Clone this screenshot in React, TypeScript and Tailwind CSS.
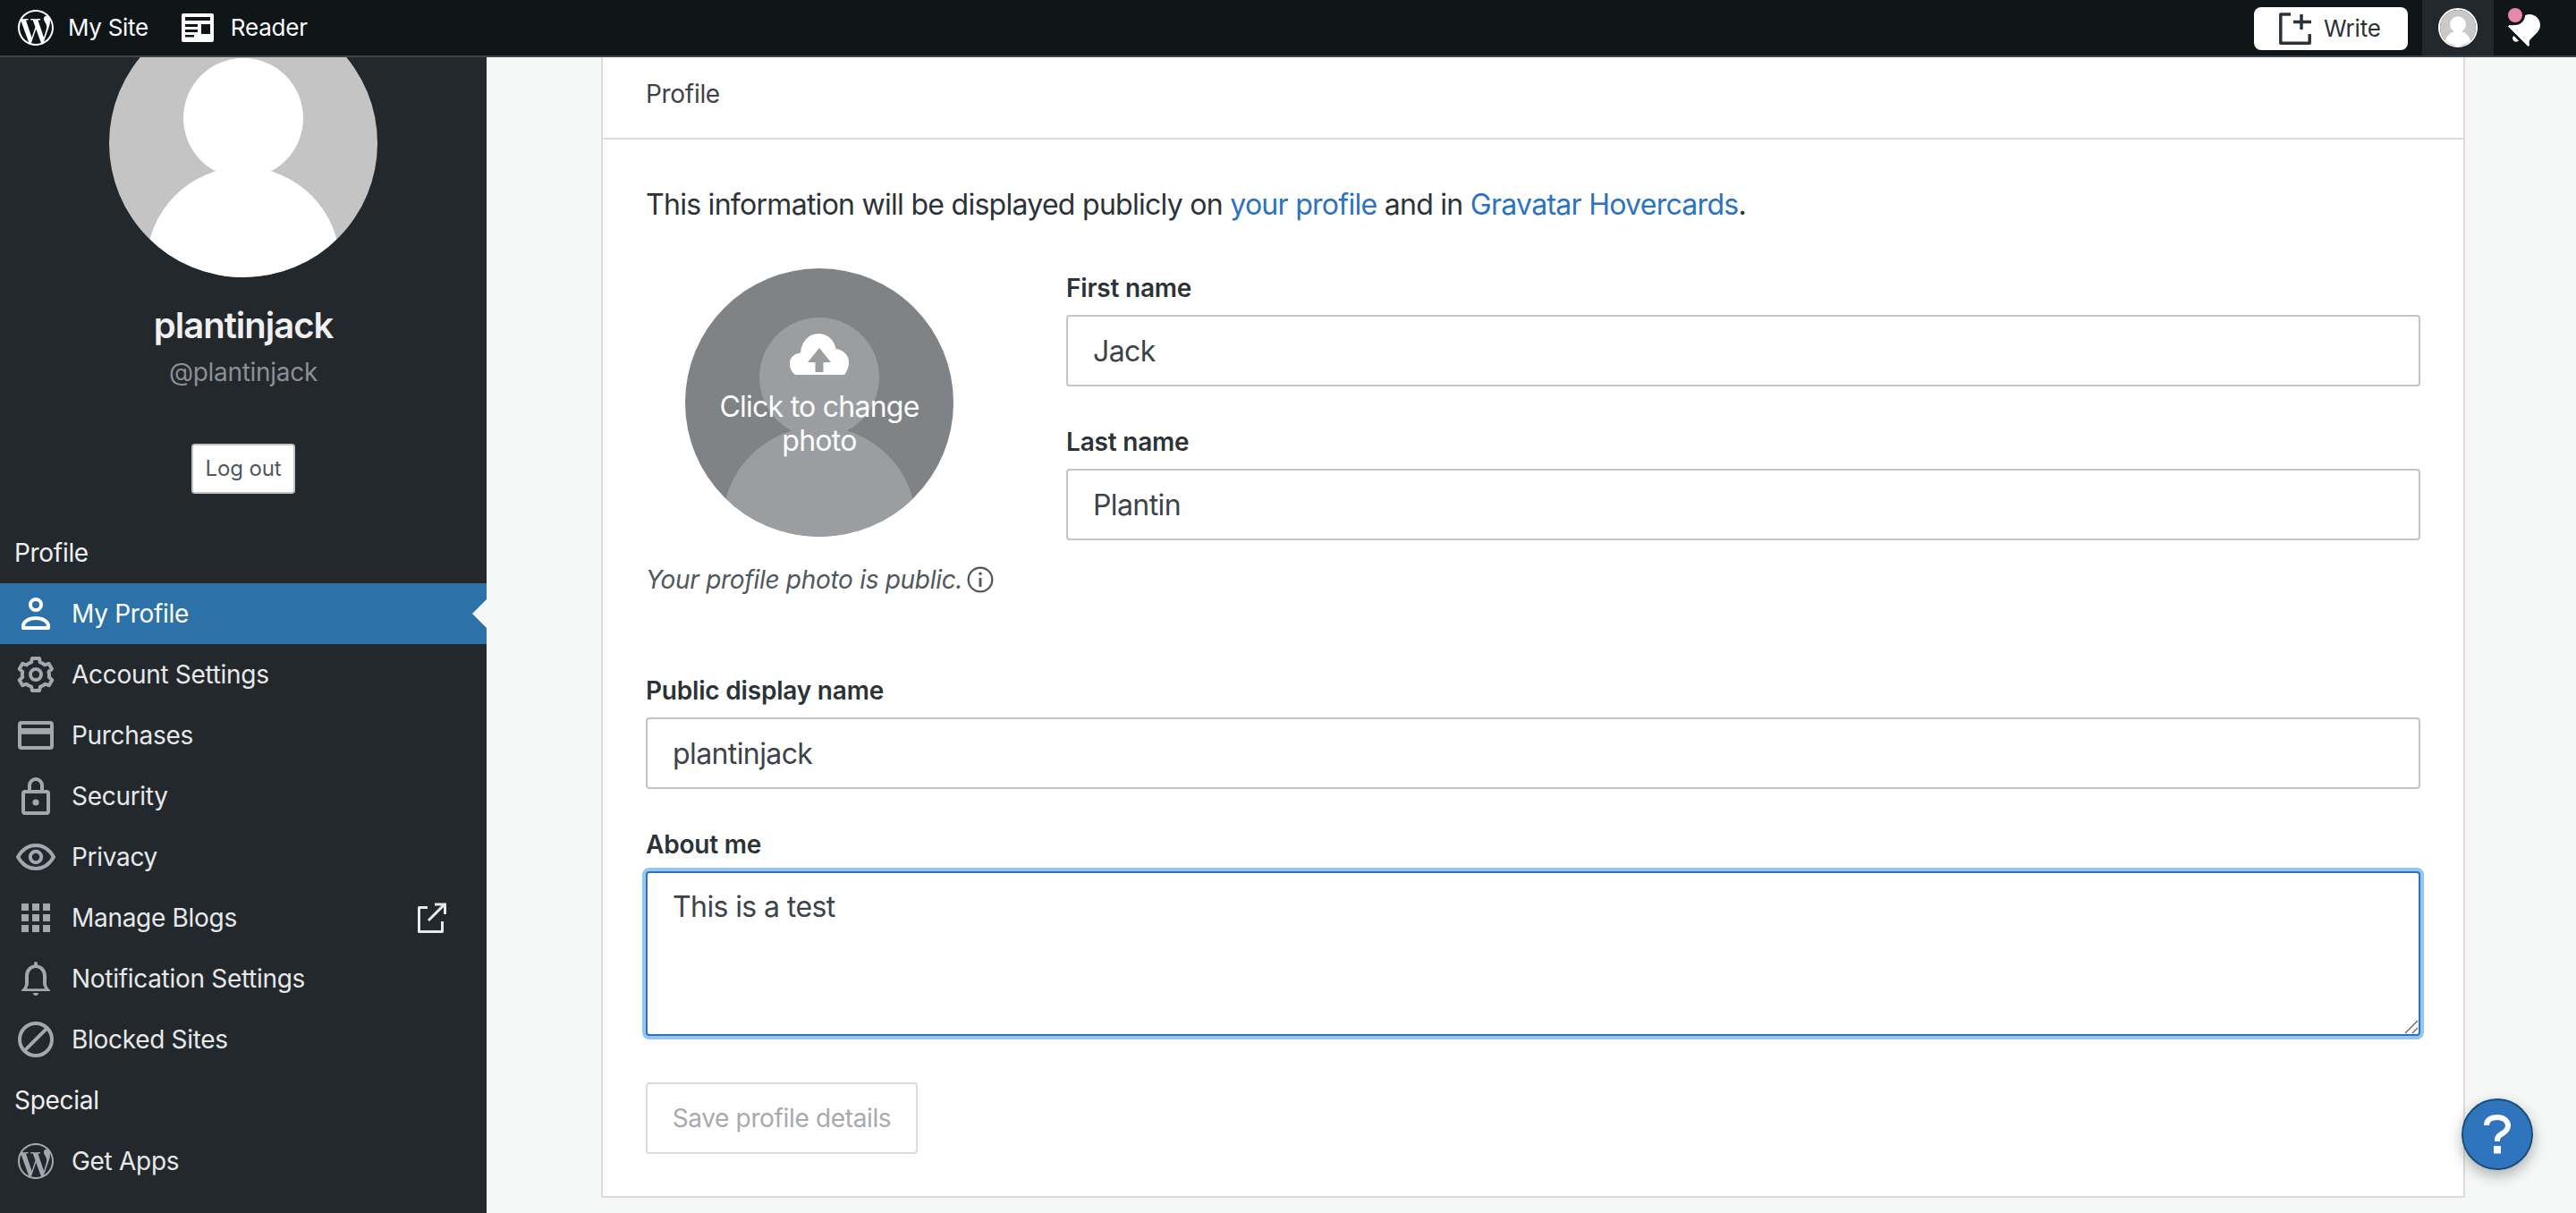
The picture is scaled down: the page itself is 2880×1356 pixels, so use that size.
import React from "react";

const WP_PATH =
  "M12.158 12.786l-2.698 7.84c.806.236 1.657.365 2.54.365 1.047 0 2.05-.18 2.986-.51-.024-.037-.046-.078-.065-.123l-2.762-7.57zM3.008 12c0 3.56 2.07 6.634 5.068 8.092L3.788 8.342c-.5 1.117-.78 2.354-.78 3.658zm15.06-.454c0-1.112-.398-1.88-.74-2.48-.456-.74-.883-1.368-.883-2.11 0-.825.627-1.595 1.51-1.595.04 0 .078.006.116.008-1.598-1.464-3.73-2.36-6.07-2.36-3.14 0-5.904 1.613-7.512 4.053.21.008.41.012.58.012.94 0 2.395-.114 2.395-.114.484-.028.54.684.057.74 0 0-.487.058-1.03.086l3.275 9.74 1.968-5.902-1.4-3.838c-.485-.028-.944-.085-.944-.085-.486-.03-.43-.77.056-.742 0 0 1.484.114 2.368.114.94 0 2.397-.114 2.397-.114.486-.028.543.684.058.74 0 0-.488.058-1.03.086l3.25 9.665.897-2.997c.456-1.17.684-2.137.684-2.907zm1.82-3.86c.04.286.06.593.06.924 0 .912-.17 1.938-.683 3.22l-2.746 7.94c2.672-1.558 4.47-4.454 4.47-7.77 0-1.564-.4-3.033-1.1-4.314zM12 22C6.486 22 2 17.514 2 12S6.486 2 12 2s10 4.486 10 10-4.486 10-10 10z";

const Wp = ({ className }: { className: string }) => (
  <svg viewBox="0 0 24 24" className={className} fill="currentColor">
    <path d={WP_PATH} />
  </svg>
);

const icons: Record<string, React.ReactNode> = {
  user: (
    <>
      <circle cx="12" cy="7" r="3" fill="none" stroke="currentColor" strokeWidth="2" />
      <path d="M5 20v-1.2C5 16.5 8 14.5 12 14.5s7 2 7 4.3V20z" fill="none" stroke="currentColor" strokeWidth="2" strokeLinejoin="round" />
    </>
  ),
  cog: (
    <>
      <path
        d="M19.4 12c0-.55-.06-1-.17-1.5l1.75-1.6-1.75-3-2.25.76c-.75-.66-1.65-1.2-2.65-1.5L14 3h-4l-.5 2.16c-1 .3-1.9.84-2.65 1.5L4.6 5.9 2.85 8.9l1.75 1.6c-.1.5-.17.95-.17 1.5s.07 1 .17 1.5l-1.75 1.6 1.75 3 2.25-.76c.75.66 1.65 1.2 2.65 1.5L10 21h4l.5-2.16c1-.3 1.9-.84 2.65-1.5l2.25.76 1.75-3-1.75-1.6c.11-.5.17-.95.17-1.5z"
        fill="none"
        stroke="currentColor"
        strokeWidth="2"
        strokeLinejoin="round"
      />
      <circle cx="12" cy="12" r="3" fill="none" stroke="currentColor" strokeWidth="2" />
    </>
  ),
  card: (
    <>
      <rect x="3" y="5" width="18" height="14" rx="1" fill="none" stroke="currentColor" strokeWidth="2" />
      <rect x="3" y="8" width="18" height="3.4" fill="currentColor" />
    </>
  ),
  lock: (
    <>
      <rect x="5" y="9.5" width="14" height="12" rx="1" fill="none" stroke="currentColor" strokeWidth="2" />
      <path d="M8.5 9.5V6a3.5 3.5 0 0 1 7 0v3.5" fill="none" stroke="currentColor" strokeWidth="2" />
      <circle cx="12" cy="15.5" r="1.8" fill="currentColor" />
    </>
  ),
  eye: (
    <>
      <path d="M2 12c2.2-3.8 5.8-6.5 10-6.5S19.8 8.2 22 12c-2.2 3.800-5.800 6.500-10 6.500S4.200 15.800 2 12z" fill="none" stroke="currentColor" strokeWidth="2" strokeLinejoin="round" />
      <circle cx="12" cy="12" r="3.100" fill="none" stroke="currentColor" strokeWidth="2" />
    </>
  ),
  grid: (
    <path d="M4 4h4v4H4zM10 4h4v4h-4zM16 4h4v4h-4zM4 10h4v4H4zM10 10h4v4h-4zM16 10h4v4h-4zM4 16h4v4H4zM10 16h4v4h-4zM16 16h4v4h-4z" fill="currentColor" />
  ),
  bell: (
    <>
      <path d="M4 19v-.6c1.300-.9 2-2.100 2-3.900V10.500C6 7.200 8.200 4.800 11 4.300V3.500a1 1 0 0 1 2 0v.8c2.800.5 5 2.900 5 6.200v4c0 1.800.7 3 2 3.900v.6z M6.800 17.600h10.400c-.7-.9-1.200-1.900-1.200-3.100v-4c0-2.500-1.800-4.500-4-4.500s-4 2-4 4.500v4c0 1.200-.5 2.200-1.200 3.100z" fill="currentColor" fillRule="evenodd" />
      <path d="M10.500 20h3c0 .9-.7 1.500-1.500 1.500s-1.500-.6-1.500-1.500z" fill="currentColor" />
    </>
  ),
  block: (
    <>
      <circle cx="12" cy="12" r="9" fill="none" stroke="currentColor" strokeWidth="2" />
      <path d="M5.800 18.200L18.200 5.800" stroke="currentColor" strokeWidth="2" />
    </>
  ),
};

const Icon = ({ name }: { name: string }) => (
  <svg viewBox="0 0 24 24" className="h-[48px] w-[48px] shrink-0">
    {icons[name]}
  </svg>
);

const NavRow = ({ icon, label, active, external }: { icon: string; label: string; active?: boolean; external?: boolean }) => (
  <div className={`relative flex h-[68px] items-center gap-[16px] pl-[16px] pr-[44px] ${active ? "bg-[#2c72a9] text-white" : "text-[#e8e9ea]"}`}>
    <span className={active ? "text-white" : "text-[#a2a7b0]"}>
      {icon === "wp" ? <Wp className="h-[48px] w-[48px]" /> : <Icon name={icon} />}
    </span>
    <span className="flex-1 text-[28px] leading-[36px] tracking-[-0.3px]">{label}</span>
    {external && (
      <svg viewBox="0 0 36 36" className="h-[36px] w-[36px] text-[#e8e9ea]" fill="none" stroke="currentColor" strokeWidth="3">
        <path d="M14 6.500H4.500v27h26V22" strokeLinejoin="round" />
        <path d="M15 21L33 3M22 3h11.500V14" />
      </svg>
    )}
    {active && (
      <span className="absolute right-0 top-[18px] h-0 w-0 border-y-[16px] border-r-[16px] border-y-transparent border-r-[#f6f7f7]" />
    )}
  </div>
);

const Avatar = ({ bg, fg }: { bg: string; fg: string }) => (
  <svg viewBox="0 0 300 300" className="h-[300px] w-[300px] block">
    <defs>
      <clipPath id={`clip-${fg.slice(1)}`}>
        <circle cx="150" cy="150" r="150" />
      </clipPath>
    </defs>
    <g clipPath={`url(#clip-${fg.slice(1)})`}>
      <rect width="300" height="300" fill={bg} />
      <circle cx="150" cy="122" r="67" fill={fg} />
      <circle cx="150" cy="285" r="108" fill={fg} />
    </g>
  </svg>
);

const Field = ({ label, value, className }: { label: string; value: string; className?: string }) => (
  <div className={className}>
    <label className="block h-[36px] text-[28px] font-semibold leading-[36px] tracking-[-0.2px] text-[#2c3338]">{label}</label>
    <input
      defaultValue={value}
      className="mt-[12px] block h-[80px] w-full rounded-[4px] border-2 border-[#c3c4c7] bg-white px-[28px] text-[32px] tracking-[-0.6px] text-[#3c434a] outline-none"
    />
  </div>
);

export default function App() {
  return (
    <div className="flex h-screen w-full flex-col overflow-hidden bg-[#f6f7f7] font-['Inter',sans-serif]">
      <header className="flex h-[64px] shrink-0 items-stretch border-b-2 border-[#3c434a] bg-[#101517] text-white">
        <div className="flex items-center pl-[20px]">
          <Wp className="h-[48px] w-[48px] -mx-[4px]" />
          <span className="ml-[16px] text-[26px] leading-[36px] tracking-[-0.3px]">My Site</span>
        </div>
        <div className="ml-[37px] flex items-center">
          <svg viewBox="0 0 36 32" className="h-[32px] w-[36px]">
            <path fillRule="evenodd" fill="#fff" d="M2 0h32a2 2 0 0 1 2 2v28a2 2 0 0 1-2 2H2a2 2 0 0 1-2-2V2a2 2 0 0 1 2-2z M4 4v4h28V4z M4 12v3h14v-3z M22 12v11h10V12z M4 18v3h14v-3z M4 24v2.500h10V24z" />
          </svg>
          <span className="ml-[19px] text-[26px] leading-[36px] tracking-[-0.2px]">Reader</span>
        </div>
        <div className="ml-auto flex items-stretch">
          <div className="my-[8px] flex h-[48px] w-[172px] items-center rounded-[8px] bg-white pl-[28px] text-[#2c3338]">
            <svg viewBox="0 0 36 36" className="h-[36px] w-[36px]" fill="none" stroke="currentColor" strokeWidth="3.500">
              <path d="M13 2H1.800v32.200H34.200V24" strokeLinejoin="round" />
              <path d="M25 2v17M16 10.500h20" />
            </svg>
            <span className="ml-[14px] text-[26px] leading-[36px] tracking-[-0.2px]">Write</span>
          </div>
          <div className="ml-[16px] flex h-[62px] w-[80px] items-center justify-center bg-[#23282d]">
            <div className="h-[44px] w-[44px] overflow-hidden rounded-full border-2 border-white">
              <svg viewBox="0 0 300 300" className="h-full w-full block">
                <rect width="300" height="300" fill="#c9c9c9" />
                <circle cx="150" cy="122" r="67" fill="#fff" />
                <circle cx="150" cy="285" r="108" fill="#fff" />
              </svg>
            </div>
          </div>
          <div className="relative w-[92px]">
            <svg viewBox="0 0 24 24" className="absolute left-[10px] top-[10px] h-[48px] w-[48px]" fill="#fff">
              <path d="M6.140 14.970l2.828 2.827c-.362.362-.862.586-1.414.586-1.105 0-2-.895-2-2 0-.552.224-1.052.586-1.414zm8.867 5.324L14.300 21 3 9.700l.706-.707 1.102.157c.754.108 1.690-.122 2.077-.510l3.885-3.884c2.340-2.340 6.135-2.340 8.475 0s2.340 6.135 0 8.475l-3.885 3.886c-.388.388-.618 1.323-.510 2.077l.157 1.100z" />
            </svg>
            <span className="absolute left-[13px] top-[6px] box-content h-[16px] w-[16px] rounded-full border-[3px] border-[#101517] bg-[#e589ab]" />
          </div>
        </div>
      </header>

      <div className="flex min-h-0 flex-1">
        <aside className="w-[544px] shrink-0 overflow-hidden bg-[#23282d]">
          <div className="-mt-[54px] flex flex-col items-center">
            <Avatar bg="#c4c4c4" fg="#ffffff" />
            <div className="mt-[30px] h-[48px] text-[40px] font-semibold leading-[48px] tracking-[-1px] text-[#f0f0f1]">plantinjack</div>
            <div className="mt-[10px] h-[36px] text-[28px] leading-[36px] tracking-[-0.3px] text-[#8c8f94]">@plantinjack</div>
            <div className="mt-[62px] flex h-[56px] w-[116px] items-center justify-center rounded-[4px] border-2 border-[#c3c4c7] bg-white text-[24px] tracking-[-0.1px] text-[#50575e]">
              Log out
            </div>
          </div>
          <div className="mt-[32px] flex h-[68px] items-center pl-[16px] text-[28px] tracking-[-0.3px] text-[#f0f0f1]">Profile</div>
          <NavRow icon="user" label="My Profile" active />
          <NavRow icon="cog" label="Account Settings" />
          <NavRow icon="card" label="Purchases" />
          <NavRow icon="lock" label="Security" />
          <NavRow icon="eye" label="Privacy" />
          <NavRow icon="grid" label="Manage Blogs" external />
          <NavRow icon="bell" label="Notification Settings" />
          <NavRow icon="block" label="Blocked Sites" />
          <div className="flex h-[68px] items-center pl-[16px] text-[28px] tracking-[-0.3px] text-[#f0f0f1]">Special</div>
          <NavRow icon="wp" label="Get Apps" />
        </aside>

        <main className="relative min-w-0 flex-1 pl-[128px]">
          <section className="h-[1275px] w-[2084px] border-x-2 border-b-2 border-[#dcdcde] bg-white">
            <div className="flex h-[92px] items-center border-b-2 border-[#dcdcde] px-[48px] pb-[14px] pt-[5px] text-[28px] tracking-[-0.3px] text-[#3c434a]">Profile</div>
            <div className="px-[48px]">
              <p className="mt-[49px] text-[32px] leading-[48px] tracking-[-0.72px] text-[#2c3338]">
                This information will be displayed publicly on <span className="text-[#2c73bf]">your profile</span> and in{" "}
                <span className="text-[#2c73bf]">Gravatar Hovercards</span>.
              </p>
              <div className="mt-[47px] flex">
                <div className="w-[470px] shrink-0">
                  <div className="relative ml-[44px] h-[300px] w-[300px]">
                    <Avatar bg="#808385" fg="#9b9ea1" />
                    <div className="absolute inset-0 flex flex-col items-center pt-[73px] text-center text-white">
                      <svg viewBox="0 0 66 46" className="h-[46px] w-[66px]">
                        <path fillRule="evenodd" fill="#fff" d="M6 46C1.500 42 0 38 0 33c0-6 5-11 12-11.500C13 9 21 0 32 0c10 0 18 7 19.500 17C60 18 66 24 66 32c0 5-2 10-5 14z M33 16L20 32h8.500v11h9V32H46z" />
                      </svg>
                      <div className="mt-[17px] w-[240px] text-[32px] leading-[38px] tracking-[-0.75px]">Click to change photo</div>
                    </div>
                  </div>
                  <div className="mt-[30px] flex items-center text-[28px] italic leading-[36px] tracking-[-0.3px] text-[#50575e]">
                    Your profile photo is public.
                    <svg viewBox="0 0 24 24" className="ml-[4px] h-[32px] w-[32px]" fill="none" stroke="currentColor" strokeWidth="1.700">
                      <circle cx="12" cy="12" r="10" />
                      <path d="M12 10.500V18" strokeWidth="2.200" />
                      <circle cx="12" cy="7" r="1.300" fill="currentColor" stroke="none" />
                    </svg>
                  </div>
                </div>
                <div className="min-w-0 flex-1">
                  <Field label="First name" value="Jack" className="pt-[4px]" />
                  <Field label="Last name" value="Plantin" className="mt-[44px]" />
                </div>
              </div>
              <Field label="Public display name" value="plantinjack" className="mt-[88px]" />
              <div className="mt-[44px]">
                <label className="block h-[36px] text-[28px] font-semibold leading-[36px] tracking-[-0.2px] text-[#2c3338]">About me</label>
                <div className="relative mt-[12px] h-[184px]">
                  <textarea
                    defaultValue="This is a test"
                    className="block h-full w-full resize-none rounded-[4px] border-2 border-[#2c72bd] bg-white px-[28px] py-[14px] text-[32px] leading-[48px] tracking-[-0.6px] text-[#3c434a] shadow-[0_0_0_4px_#96c6ec] outline-none"
                  />
                  <svg viewBox="0 0 16 16" className="absolute bottom-[2px] right-[2px] h-[16px] w-[16px]" stroke="#666" strokeWidth="1.400">
                    <path d="M1 15L15 1M9 15l6-6" />
                  </svg>
                </div>
              </div>
              <div className="mt-[52px] flex h-[80px] w-[304px] items-center justify-center rounded-[4px] border-2 border-[#dcdcde] bg-white text-[28px] tracking-[-0.35px] text-[#a7aaad]">
                Save profile details
              </div>
            </div>
          </section>
          <div className="absolute right-[48px] top-[1164px] flex h-[80px] w-[80px] items-center justify-center rounded-full border-2 border-[#1a4e7f] bg-[#2e75bd] shadow-[0_6px_16px_rgba(0,0,0,0.3)]">
            <svg viewBox="0 0 30 44" className="h-[44px] w-[30px]" fill="none" stroke="#fff" strokeWidth="6">
              <path d="M3 12C3 6 8 3 15 3s12 4 12 9.500c0 4.500-3 6.500-6 8.500-3 1.500-6 3-6 7v2" />
              <path d="M11 35h8v8.500h-8z" fill="#fff" stroke="none" />
            </svg>
          </div>
        </main>
      </div>
    </div>
  );
}
